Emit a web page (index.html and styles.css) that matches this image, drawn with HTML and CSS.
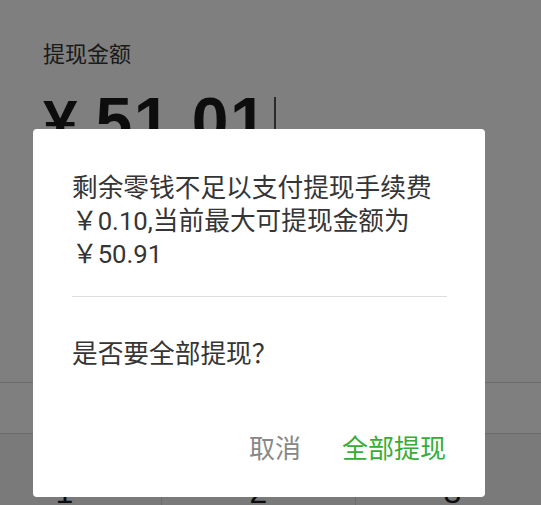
FILE: index.html
```html
<!DOCTYPE html>
<html lang="zh-CN">
<head>
<meta charset="utf-8">
<title>提现</title>
<link rel="stylesheet" href="styles.css">
</head>
<body>
<div class="page">
  <section class="top">
    <div class="label">提现金额</div>
    <div class="amount-row">
      <span class="yen">¥</span><span class="amount">51.01</span><span class="cursor"></span>
    </div>
  </section>
  <div class="info-row"></div>
  <div class="keypad">
    <div class="key">1</div>
    <div class="key">2</div>
    <div class="key">3</div>
  </div>
</div>
<div class="mask">
  <div class="dialog">
    <p class="msg">剩余零钱不足以支付提现手续费<br>￥0.10,当前最大可提现金额为<br>￥50.91</p>
    <div class="divider"></div>
    <p class="msg ask">是否要全部提现<span class="qmark">？</span></p>
    <div class="actions">
      <span class="btn cancel">取消</span>
      <span class="btn primary">全部提现</span>
    </div>
  </div>
</div>
</body>
</html>
```
FILE: styles.css
```css
html, body {
  margin: 0;
  padding: 0;
}
body {
  width: 541px;
  height: 505px;
  overflow: hidden;
  position: relative;
  background: #ffffff;
  font-family: Roboto, "Noto Sans CJK SC", sans-serif;
}
.page {
  display: flex;
  flex-direction: column;
  height: 505px;
}
.top {
  flex: 0 0 382px;
  padding: 37px 0 0 43px;
  box-sizing: border-box;
  background: #ffffff;
}
.label {
  font-family: "Noto Sans CJK SC", sans-serif;
  font-size: 22px;
  line-height: 30px;
  color: #353535;
}
.amount-row {
  margin-top: 21px;
  display: flex;
  align-items: flex-start;
  font-family: "Liberation Sans", Arial, sans-serif;
  font-weight: bold;
  font-size: 66px;
  line-height: 1;
  color: #1a1a1a;
}
.yen {
  margin-right: 18px;
  font-size: 62px;
  margin-top: 3px;
}
.amount {
  letter-spacing: 1.5px;
}
.cursor {
  width: 2px;
  height: 70px;
  margin-top: 9px;
  margin-left: 6px;
  background: #555555;
}
.info-row {
  flex: 0 0 51px;
  box-sizing: border-box;
  border-top: 1px solid #d9d9d9;
  background: #ffffff;
}
.keypad {
  flex: 1 1 auto;
  min-height: 0;
  overflow: hidden;
  display: grid;
  grid-template-columns: repeat(3, 194px);
  margin-left: -32px;
  border-top: 1px solid #d9d9d9;
  background: #f5f5f5;
}
.key {
  display: flex;
  justify-content: center;
  padding-top: 40px;
  font-family: "Liberation Sans", Arial, sans-serif;
  font-size: 32px;
  line-height: 37px;
  color: #1a1a1a;
  border-right: 1px solid #d9d9d9;
}
.mask {
  position: absolute;
  inset: 0;
  background: rgba(0, 0, 0, 0.5);
}
.dialog {
  position: absolute;
  left: 33px;
  top: 129px;
  width: 452px;
  height: 368px;
  box-sizing: border-box;
  padding: 43px 38px 0 39px;
  background: #ffffff;
  border-radius: 4px;
  display: flex;
  flex-direction: column;
}
.msg {
  margin: 0;
  font-size: 25.7px;
  line-height: 33px;
  color: #353535;
}
.qmark {
  font-family: "Noto Sans CJK JP", "Noto Sans CJK SC", sans-serif;
}
.divider {
  margin-top: 25px;
  height: 1px;
  background: #dedede;
}
.ask {
  margin-top: 38px;
}
.actions {
  margin-top: auto;
  margin-bottom: 34px;
  display: flex;
  justify-content: flex-end;
  gap: 41px;
  padding-right: 1px;
  font-family: "Noto Sans CJK SC", sans-serif;
  font-size: 26px;
  line-height: 33px;
}
.cancel {
  color: #888888;
}
.primary {
  color: #36ad36;
}
```
